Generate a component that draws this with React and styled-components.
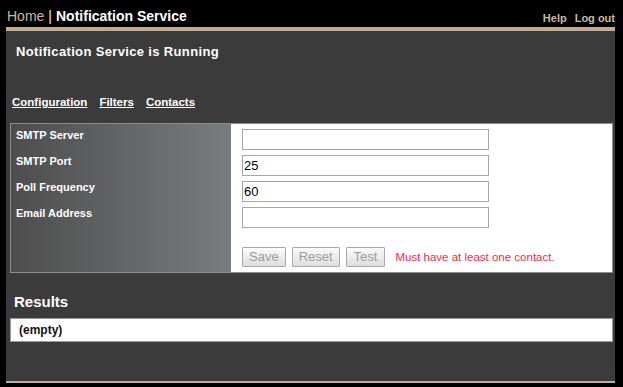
import React from "react";
import styled, { createGlobalStyle } from "styled-components";

const Global = createGlobalStyle`
  html, body { margin: 0; padding: 0; background: #000; }
  body { font-family: "Liberation Sans", Arial, sans-serif; }
  * { box-sizing: border-box; }
`;

const TAN = "#c1ab91";

const Page = styled.div`
  width: 623px;
  height: 387px;
  background: #000;
  padding: 0 8px 0 6px;
  display: flex;
  flex-direction: column;
`;

const Header = styled.header`
  height: 27px;
  display: flex;
  justify-content: space-between;
  align-items: flex-end;
`;

const Title = styled.div`
  font-size: 14px;
  line-height: 16px;
  padding: 0 0 3px 1px;
  white-space: nowrap;
`;

const HomeLink = styled.span`
  color: #cdb99e;
`;

const Sep = styled.span`
  color: #e6e6e6;
  margin: 0 4px;
`;

const Current = styled.span`
  color: #fff;
  font-weight: bold;
`;

const TopNav = styled.nav`
  display: flex;
  gap: 8px;
  padding-bottom: 2px;
`;

const TopLink = styled.span`
  color: #cdb99e;
  font-size: 11px;
  font-weight: bold;
  line-height: 13px;
`;

const Panel = styled.main`
  height: 356px;
  background: #3b3b3b;
  border-top: 4px solid ${TAN};
  border-bottom: 2px solid ${TAN};
  display: flex;
  flex-direction: column;
`;

const Status = styled.h1`
  margin: 13px 0 0 10px;
  font-size: 13px;
  line-height: 16px;
  letter-spacing: 0.35px;
  color: #fff;
  font-weight: bold;
`;

const Tabs = styled.nav`
  display: flex;
  gap: 12px;
  margin: 35px 0 0 6px;
`;

const Tab = styled.span`
  color: #fff;
  font-size: 11.5px;
  font-weight: bold;
  line-height: 14px;
  text-decoration: underline;
`;

const FormBox = styled.section`
  margin: 14px 2px 0 4px;
  border: 1px solid #8e8e8e;
  display: grid;
  grid-template-columns: 220px 1fr;
  height: 150px;
`;

const LabelCol = styled.div`
  background: linear-gradient(to right, #4d4d4d, #797c7e);
  padding: 5px 0 0 5px;
  display: flex;
  flex-direction: column;
  gap: 13px;
`;

const Label = styled.label`
  color: #fff;
  font-size: 11px;
  font-weight: bold;
  line-height: 13px;
`;

const FieldCol = styled.div`
  background: #fff;
  padding: 5px 0 5px 11px;
  display: flex;
  flex-direction: column;
  gap: 5px;
`;

const Input = styled.input`
  width: 247px;
  height: 21px;
  border: 1px solid #a6a6a6;
  padding: 0 1px;
  margin: 0;
  font-family: "Liberation Sans", Arial, sans-serif;
  font-size: 13px;
  color: #000;
  background: #fff;
  outline: none;
`;

const ButtonRow = styled.div`
  margin-top: 14px;
  display: flex;
  align-items: center;
  gap: 6px;
`;

const Button = styled.button`
  height: 20px;
  padding: 0 ${(p) => p.$pad || 6}px;
  margin: 0;
  border: 1px solid #a9a9a9;
  border-radius: 1px;
  background: linear-gradient(#fbfbfb, #dedede);
  color: #9c9c9c;
  font-family: "Liberation Sans", Arial, sans-serif;
  font-size: 13px;
  line-height: 18px;
`;

const Message = styled.span`
  margin-left: 4px;
  color: #ff1f4e;
  font-size: 11.5px;
`;

const ResultsTitle = styled.h2`
  margin: 20px 0 0 8px;
  font-size: 15px;
  line-height: 18px;
  color: #fff;
  font-weight: bold;
`;

const ResultsBox = styled.div`
  margin: 7px 2px 0 4px;
  height: 24px;
  background: #fff;
  border: 1px solid #9a9a9a;
  padding-left: 8px;
  display: flex;
  align-items: center;
  font-size: 12px;
  font-weight: bold;
  color: #111;
`;

const fields = [
  { label: "SMTP Server", value: "" },
  { label: "SMTP Port", value: "25" },
  { label: "Poll Frequency", value: "60" },
  { label: "Email Address", value: "" },
];

export default function App() {
  return (
    <>
      <Global />
      <Page>
        <Header>
          <Title>
            <HomeLink>Home</HomeLink>
            <Sep>|</Sep>
            <Current>Notification Service</Current>
          </Title>
          <TopNav>
            <TopLink>Help</TopLink>
            <TopLink>Log out</TopLink>
          </TopNav>
        </Header>
        <Panel>
          <Status>Notification Service is Running</Status>
          <Tabs>
            <Tab>Configuration</Tab>
            <Tab>Filters</Tab>
            <Tab>Contacts</Tab>
          </Tabs>
          <FormBox>
            <LabelCol>
              {fields.map((f) => (
                <Label key={f.label}>{f.label}</Label>
              ))}
            </LabelCol>
            <FieldCol>
              {fields.map((f) => (
                <Input key={f.label} defaultValue={f.value} />
              ))}
              <ButtonRow>
                <Button disabled>Save</Button>
                <Button disabled>Reset</Button>
                <Button disabled $pad={7}>Test</Button>
                <Message>Must have at least one contact.</Message>
              </ButtonRow>
            </FieldCol>
          </FormBox>
          <ResultsTitle>Results</ResultsTitle>
          <ResultsBox>(empty)</ResultsBox>
        </Panel>
      </Page>
    </>
  );
}
